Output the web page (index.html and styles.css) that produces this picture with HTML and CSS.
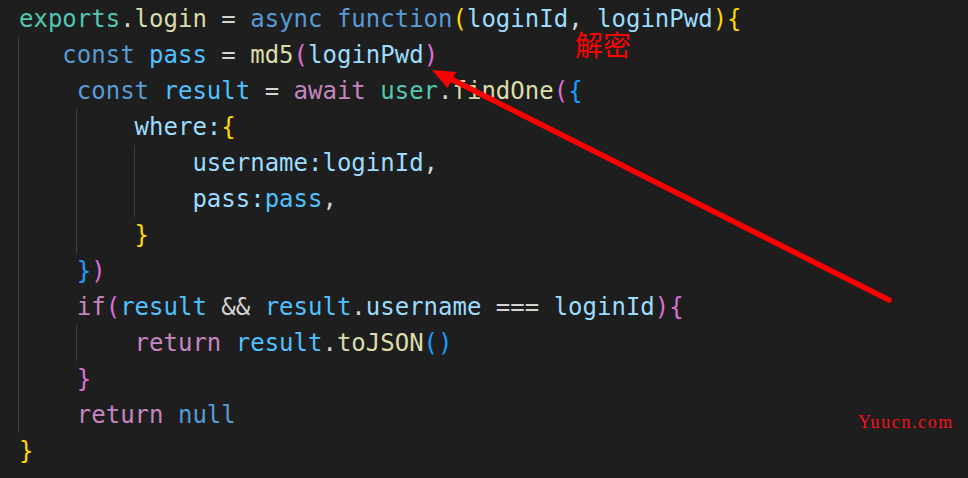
FILE: index.html
```html
<!DOCTYPE html>
<html lang="en">
<head>
    <meta charset="UTF-8">
    <meta name="viewport" content="width=device-width, initial-scale=1.0">
    <title>login.js</title>
    <link rel="stylesheet" href="styles.css">
</head>
<body>
    <div class="editor">
        <div class="code">
            <div class="line"><span class="cls">exports</span>.<span class="fn">login</span> = <span class="kw">async</span> <span class="kw">function</span><span class="b1">(</span><span class="var">loginId</span>, <span class="var">loginPwd</span><span class="b1">)</span><span class="b1">{</span></div>
            <div class="guide">
                <div class="line">   <span class="kw">const</span> <span class="cst">pass</span> = <span class="fn">md5</span><span class="b2">(</span><span class="var">loginPwd</span><span class="b2">)</span></div>
                <div class="line">    <span class="kw">const</span> <span class="cst">result</span> = <span class="ctl">await</span> <span class="cls">user</span>.<span class="fn">findOne</span><span class="b2">(</span><span class="b3">{</span></div>
                <div class="guide nested">
                    <div class="line">    <span class="var">where:</span><span class="b1">{</span></div>
                    <div class="guide nested">
                        <div class="line">    <span class="var">username:loginId</span>,</div>
                        <div class="line">    <span class="var">pass:</span><span class="cst">pass</span>,</div>
                    </div>
                    <div class="line">    <span class="b1">}</span></div>
                </div>
                <div class="line">    <span class="b3">}</span><span class="b2">)</span></div>
                <div class="line">    <span class="ctl">if</span><span class="b2">(</span><span class="cst">result</span> &amp;&amp; <span class="cst">result</span>.<span class="var">username</span> === <span class="var">loginId</span><span class="b2">)</span><span class="b2">{</span></div>
                <div class="guide nested">
                    <div class="line">    <span class="ctl">return</span> <span class="cst">result</span>.<span class="fn">toJSON</span><span class="b3">()</span></div>
                </div>
                <div class="line">    <span class="b2">}</span></div>
                <div class="line">    <span class="ctl">return</span> <span class="kw">null</span></div>
            </div>
            <div class="line"><span class="b1">}</span></div>
        </div>

        <!-- annotations drawn over the screenshot -->
        <svg class="arrow" width="968" height="478" viewBox="0 0 968 478">
            <line x1="889" y1="300" x2="449" y2="78" stroke="#ff0000" stroke-width="5.5" stroke-linecap="round"/>
            <polygon points="432,70 456,72 447.5,88" fill="#ff0000"/>
        </svg>
        <div class="note">解密</div>
        <div class="watermark">Yuucn.com</div>
    </div>
</body>
</html>
```

FILE: styles.css
```css
body {
    margin: 0;
    background: #1e1e1e;
    overflow: hidden;
}

.editor {
    position: relative;
    width: 968px;
    height: 478px;
    background: #1e1e1e;
}

.code {
    padding: 1px 0 0 19px;
    font-family: "DejaVu Sans Mono", monospace;
    font-size: 24px;
    color: #d4d4d4;
}

.line {
    height: 36px;
    line-height: 36px;
    white-space: pre;
}

.guide {
    margin-left: -1px;
    border-left: 1px solid #404040;
}

.guide.nested {
    margin-left: calc(4ch - 1px);
}

.kw { color: #569cd6; }
.ctl { color: #c586c0; }
.fn { color: #dcdcaa; }
.cls { color: #4ec9b0; }
.var { color: #9cdcfe; }
.cst { color: #4fc1ff; }
.b1 { color: #ffd700; }
.b2 { color: #da70d6; }
.b3 { color: #179fff; }

.arrow {
    position: absolute;
    top: 0;
    left: 0;
}

.note {
    position: absolute;
    left: 575px;
    top: 30px;
    font-family: "Noto Sans CJK SC", sans-serif;
    font-size: 28px;
    line-height: 28px;
    color: #ff0000;
}

.watermark {
    position: absolute;
    left: 858px;
    top: 410px;
    font-family: "Liberation Serif", serif;
    font-size: 18px;
    line-height: 24px;
    letter-spacing: 1.6px;
    color: #f5101e;
}
```
